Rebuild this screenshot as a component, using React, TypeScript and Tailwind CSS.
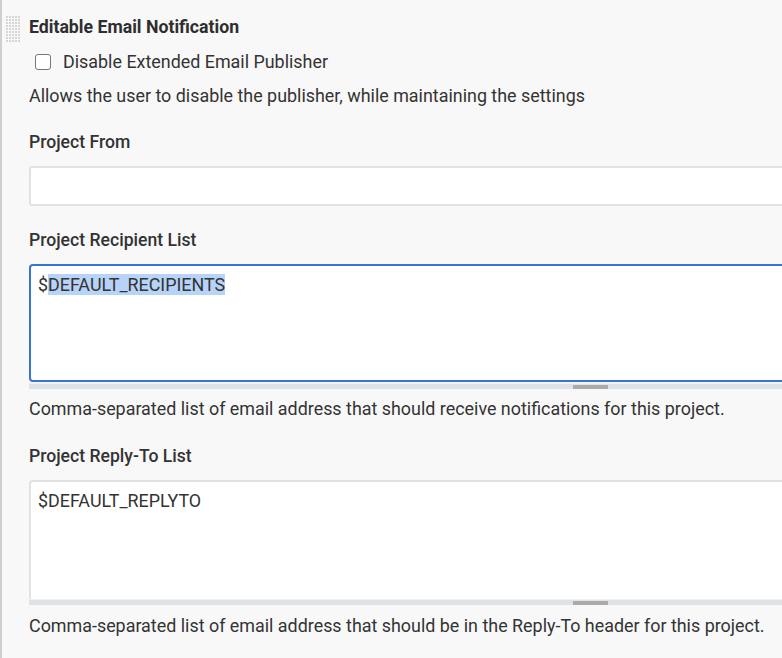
import React from "react";

function Grip() {
  const dots: React.ReactNode[] = [];
  for (let r = 0; r < 9; r++) {
    for (let c = 0; c < 5; c++) {
      dots.push(<rect key={`${r}-${c}`} x={c * 3} y={r * 3} width={2} height={2} fill="#d6d6d6" />);
    }
  }
  return (
    <svg width="14" height="27" viewBox="0 0 14 27" className="block">
      {dots}
    </svg>
  );
}

function ResizeBar() {
  return (
    <div className="relative h-[6px] w-[800px] bg-[#dfe3e7] border-t border-[#eef0f2]">
      <div className="absolute left-[544px] top-[1px] h-[4px] w-[35px] bg-[#a9abad]" />
    </div>
  );
}

export default function App() {
  return (
    <div
      className="h-[658px] w-[782px] overflow-hidden bg-[#f8f8f8] text-[#333] flex"
      style={{ fontFamily: "Roboto, 'Liberation Sans', sans-serif" }}
    >
      <div className="w-[2px] shrink-0 bg-[#cfcfcf]" />
      <div className="relative flex-1 pl-[27px] pt-[15px]">
        <div className="absolute left-[4px] top-[16px]">
          <Grip />
        </div>
        <div className="text-[17.7px] leading-6 font-bold text-[#2e2e2e] whitespace-nowrap">Editable Email Notification</div>
        <div className="mt-[11px] flex items-center h-6 pl-[6px]">
          <div className="h-4 w-4 rounded-[3px] border-[1.5px] border-[#777] bg-white" />
          <span className="ml-[12px] text-[17.9px] leading-6 whitespace-nowrap">Disable Extended Email Publisher</span>
        </div>
        <div className="mt-[10px] text-[17.9px] leading-6 whitespace-nowrap">
          Allows the user to disable the publisher, while maintaining the settings
        </div>

        <div className="mt-[22px] text-[17.6px] leading-6 font-medium whitespace-nowrap">Project From</div>
        <div className="mt-[12px] h-[40px] w-[800px] rounded-[3px] border-2 border-[#e2e2e2] bg-white" />

        <div className="mt-[22px] text-[17.6px] leading-6 font-medium whitespace-nowrap">Project Recipient List</div>
        <div className="mt-[12px] h-[118px] w-[800px] rounded-[4px] border-2 border-[#3a72d8] bg-white pl-[7px] pt-[7px] text-[17.9px] leading-6 whitespace-nowrap">
          $<span className="bg-[#b7d3f7]">DEFAULT_RECIPIENTS</span>
        </div>
        <div className="mt-[1px]">
          <ResizeBar />
        </div>
        <div className="mt-[8px] text-[17.9px] leading-6 whitespace-nowrap">
          Comma-separated list of email address that should receive notifications for this project.
        </div>

        <div className="mt-[23px] text-[17.6px] leading-6 font-medium whitespace-nowrap">Project Reply-To List</div>
        <div className="mt-[12px] h-[119px] w-[800px] rounded-t-[4px] border-2 border-b-0 border-[#e2e2e2] bg-white pl-[7px] pt-[7px] text-[17.9px] leading-6 whitespace-nowrap">
          $DEFAULT_REPLYTO
        </div>
        <ResizeBar />
        <div className="mt-[9px] text-[17.9px] leading-6 whitespace-nowrap">
          Comma-separated list of email address that should be in the Reply-To header for this project.
        </div>
      </div>
    </div>
  );
}
